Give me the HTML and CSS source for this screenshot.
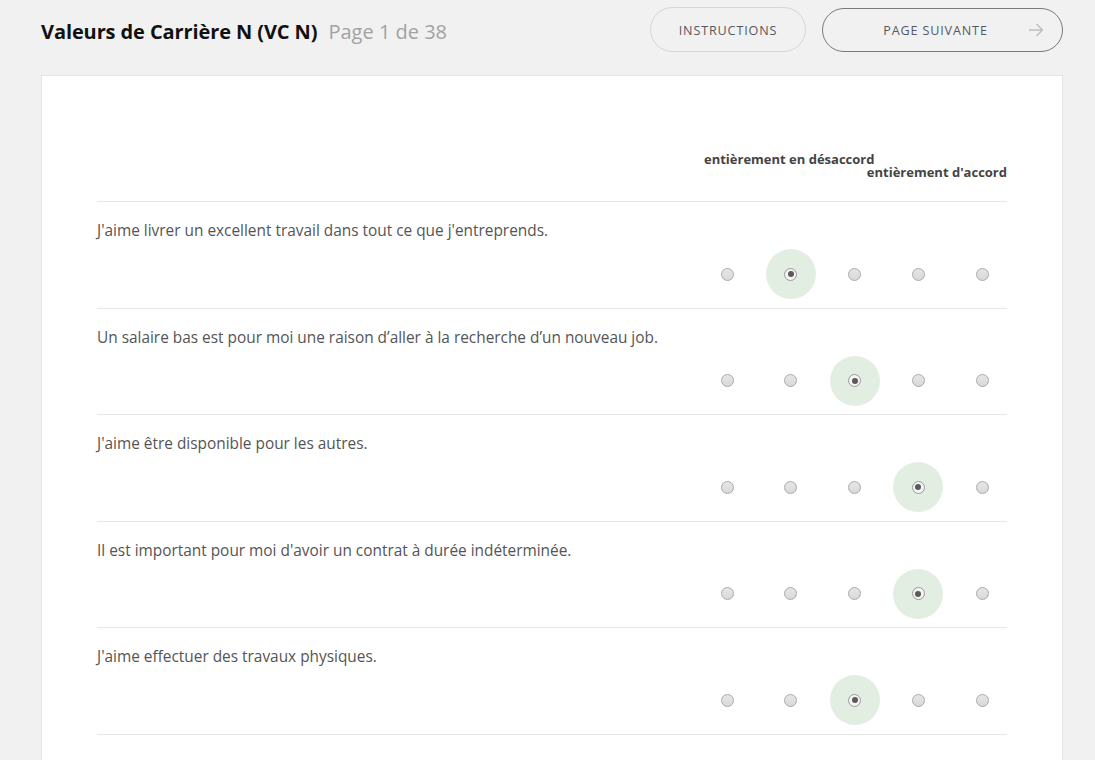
FILE: index.html
```html
<!DOCTYPE html>
<html lang="fr">
<head>
<meta charset="utf-8">
<title>Valeurs de Carrière N (VC N)</title>
<link rel="stylesheet" href="styles.css">
</head>
<body>
<header class="topbar">
  <div class="titles">
    <h1 class="title">Valeurs de Carrière N (VC N)</h1>
    <span class="pager">Page 1 de 38</span>
  </div>
  <div class="actions">
    <button class="btn btn-light">INSTRUCTIONS</button>
    <button class="btn btn-next"><span class="btn-label">PAGE SUIVANTE</span>
      <svg class="arrow" width="16" height="14" viewBox="0 0 16 14"><path d="M1 7 H14.5 M8.5 1 L14.5 7 L8.5 13" fill="none" stroke="#bdbdbd" stroke-width="1.3"/></svg>
    </button>
  </div>
</header>
<main class="card">
  <div class="scale-head">
    <div class="scale-labels">
      <span class="lbl-left">entièrement en désaccord</span>
      <span class="lbl-right">entièrement d'accord</span>
    </div>
  </div>
  <div class="item">
    <p class="q">J'aime livrer un excellent travail dans tout ce que j'entreprends.</p>
    <div class="choices">
      <span class="cell"><span class="radio"></span></span>
      <span class="cell sel"><span class="radio on"></span></span>
      <span class="cell"><span class="radio"></span></span>
      <span class="cell"><span class="radio"></span></span>
      <span class="cell"><span class="radio"></span></span>
    </div>
  </div>
  <div class="item">
    <p class="q">Un salaire bas est pour moi une raison d’aller à la recherche d’un nouveau job.</p>
    <div class="choices">
      <span class="cell"><span class="radio"></span></span>
      <span class="cell"><span class="radio"></span></span>
      <span class="cell sel"><span class="radio on"></span></span>
      <span class="cell"><span class="radio"></span></span>
      <span class="cell"><span class="radio"></span></span>
    </div>
  </div>
  <div class="item">
    <p class="q">J'aime être disponible pour les autres.</p>
    <div class="choices">
      <span class="cell"><span class="radio"></span></span>
      <span class="cell"><span class="radio"></span></span>
      <span class="cell"><span class="radio"></span></span>
      <span class="cell sel"><span class="radio on"></span></span>
      <span class="cell"><span class="radio"></span></span>
    </div>
  </div>
  <div class="item">
    <p class="q">Il est important pour moi d'avoir un contrat à durée indéterminée.</p>
    <div class="choices">
      <span class="cell"><span class="radio"></span></span>
      <span class="cell"><span class="radio"></span></span>
      <span class="cell"><span class="radio"></span></span>
      <span class="cell sel"><span class="radio on"></span></span>
      <span class="cell"><span class="radio"></span></span>
    </div>
  </div>
  <div class="item">
    <p class="q">J'aime effectuer des travaux physiques.</p>
    <div class="choices">
      <span class="cell"><span class="radio"></span></span>
      <span class="cell"><span class="radio"></span></span>
      <span class="cell sel"><span class="radio on"></span></span>
      <span class="cell"><span class="radio"></span></span>
      <span class="cell"><span class="radio"></span></span>
    </div>
  </div>
  <div class="item last"></div>
</main>
</body>
</html>
```
FILE: styles.css
```css
* { box-sizing: border-box; }
html, body { margin: 0; padding: 0; }
body {
  background: #f1f1f1;
  font-family: "Open Sans", "DejaVu Sans", sans-serif;
  color: #555;
  overflow: hidden;
  height: 760px;
}
.topbar {
  display: flex;
  align-items: center;
  justify-content: space-between;
  padding: 7px 32px 0 41px;
  height: 52px;
}
.titles {
  display: flex;
  align-items: baseline;
  gap: 11px;
  padding-top: 3px;
}
.title {
  margin: 0;
  font-size: 20px;
  font-weight: 700;
  color: #111;
  letter-spacing: -0.1px;
}
.pager {
  font-size: 20px;
  color: #a2a2a2;
}
.actions {
  display: flex;
  gap: 16px;
  align-items: flex-start;
  height: 45px;
}
.btn {
  font-family: "Open Sans", "DejaVu Sans", sans-serif;
  font-size: 12.6px;
  letter-spacing: 0.85px;
  color: #55595f;
  background: transparent;
  border-radius: 23px;
  cursor: pointer;
  padding-top: 2px;
}
.btn-light {
  width: 156px;
  height: 45px;
  border: 1px solid #d6d6d6;
}
.btn-next {
  margin-top: 1px;
  width: 241px;
  height: 44px;
  border: 1px solid #7a7a7a;
  display: flex;
  align-items: center;
  padding: 1px 18px 0 40px;
}
.btn-label { flex: 1; text-align: center; }
.arrow { display: block; margin-left: 20px; margin-top: -2px; }

.card {
  margin: 23px 32px 0 41px;
  background: #fff;
  border: 1px solid #e4e4e4;
  padding: 77px 55px 0 55px;
  height: 800px;
}
.scale-head {
  display: flex;
  justify-content: flex-end;
  padding-bottom: 22px;
}
.scale-labels {
  width: 303px;
  display: flex;
  flex-direction: column;
  font-size: 13px;
  font-weight: 700;
  color: #444;
  line-height: 13px;
}
.lbl-left { align-self: flex-start; }
.lbl-right { align-self: flex-end; }
.item {
  border-top: 1px solid #e8e8e8;
  padding: 18px 0 8.6px 0;
}
.item.last { padding: 0; }
.q {
  margin: 0;
  font-size: 15.4px;
  line-height: 22px;
  color: #555;
}
.choices {
  margin-top: 7px;
  display: flex;
  justify-content: flex-end;
  gap: 13.75px;
}
.cell {
  width: 50px;
  height: 50px;
  border-radius: 50%;
  display: flex;
  align-items: center;
  justify-content: center;
}
.cell.sel { background: #e3eee2; }
.radio {
  width: 13px;
  height: 13px;
  border-radius: 50%;
  border: 1px solid #a9a9a9;
  background: linear-gradient(#e6e6e6, #d9d9d9);
  position: relative;
}
.radio.on {
  background: #f4f4f4;
  border-color: #9a9a9a;
}
.radio.on::after {
  content: "";
  position: absolute;
  left: 2.5px;
  top: 2.5px;
  width: 6px;
  height: 6px;
  border-radius: 50%;
  background: #5a5a5a;
}
```
